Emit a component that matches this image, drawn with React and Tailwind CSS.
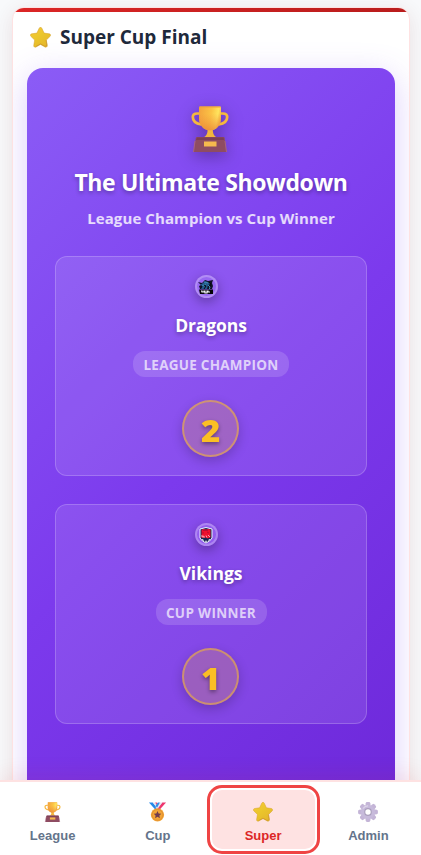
import React from "react";

function Star({ className }) {
  return (
    <svg viewBox="0 0 32 32" className={className}>
      <defs>
        <linearGradient id="starFill" x1="0" y1="0" x2="0.7" y2="1">
          <stop offset="0" stopColor="#f8c83a" />
          <stop offset="0.5" stopColor="#ebc62b" />
          <stop offset="1" stopColor="#e5b62c" />
        </linearGradient>
      </defs>
      <path
        d="M14 1.8c.8-1.7 3.2-1.7 4 0l3.5 7.5 7.9 1.1c1.9.3 2.6 2.5 1.3 3.8l-5.8 5.7 1.4 8.3c.3 1.9-1.7 3.2-3.3 2.3L16 26.6l-7 3.900c-1.700.9-3.600-.5-3.300-2.300l1.400-8.300-5.800-5.700C0 12.900.7 10.700 2.600 10.400l7.900-1.100z"
        fill="url(#starFill)"
        stroke="#d5a22e"
        strokeWidth="0.8"
      />
      <path d="M24.500 20l1.400 8-3.200 1.500L16 25.800l-7 3.900" fill="none" stroke="#c58e2c" strokeWidth="1.300" opacity=".65" />
    </svg>
  );
}

function Trophy({ className }) {
  return (
    <svg viewBox="0 0 38 46" className={className}>
      <defs>
        <linearGradient id="cupFill" x1="0" y1="0.2" x2="1" y2="0.4">
          <stop offset="0" stopColor="#f3a33e" />
          <stop offset="0.55" stopColor="#fbc345" />
          <stop offset="0.85" stopColor="#ffe45e" />
          <stop offset="1" stopColor="#f6b842" />
        </linearGradient>
        <linearGradient id="cupShade" x1="0" y1="0" x2="0" y2="1">
          <stop offset="0.3" stopColor="#ee8a3c" stopOpacity="0" />
          <stop offset="1" stopColor="#e98133" stopOpacity=".75" />
        </linearGradient>
      </defs>
      <path d="M9 7.500H6.200C3 7.500 1.800 9.200 1.800 11c0 4 3.500 6.700 8.500 7.500M29 7.500h2.800c3.200 0 4.400 1.700 4.400 3.500 0 4-3.500 6.700-8.500 7.500" fill="none" stroke="#f5b83e" strokeWidth="2.700" />
      <path d="M16.700 22h5c0 5 .8 7.500 4.200 9.500H12.500c3.400-2 4.200-4.500 4.200-9.500z" fill="#f2b63c" />
      <path d="M8 1.500Q8 .5 9 .5h20q1 0 1 1V13c0 6-5 11.500-11 11.500S8 19 8 13z" fill="url(#cupFill)" />
      <path d="M8 1.500Q8 .5 9 .5h20q1 0 1 1V13c0 6-5 11.500-11 11.500S8 19 8 13z" fill="url(#cupShade)" />
      <path d="M8.500 1h21" stroke="#efa238" />
      <path d="M6 31h26.500q1 0 1.200 1L35.500 46h-33L4.800 32q.2-1 1.200-1z" fill="#8e4c62" />
      <path d="M6 31.500h26.500L33 34H5z" fill="#7c3f54" />
      <path d="M4 35l-1.500 11M34 35l1.500 11" stroke="#a9647f" />
      <path d="M13 35.500h12.500v5H13z" fill="#f7b94d" />
    </svg>
  );
}

function Medal({ className }) {
  return (
    <svg viewBox="0 0 20 21" className={className}>
      <path d="M1 .5h4l6 7-2.500 1.500z" fill="#2689e8" />
      <path d="M5 .5h2.500l5 6-1.500 2z" fill="#e5e3f3" />
      <path d="M7.500.5h2l4 5-1.800 1.500z" fill="#f04878" />
      <path d="M19 .5h-4L9 7.500l2.500 1.500z" fill="#ee376e" />
      <path d="M15 .5h-2.500L8 6l1.500 2z" fill="#e5e3f3" />
      <path d="M12.500.5h-2L8 4l1.500 2z" fill="#338fe9" />
      <circle cx="10" cy="13.500" r="7" fill="#f3a536" />
      <circle cx="10" cy="13.500" r="5.700" fill="none" stroke="#db8a31" strokeWidth=".8" />
      <path d="M10 9.500l1.200 2.500 2.800.3-2 1.900.5 2.800-2.500-1.400-2.500 1.400.5-2.800-2-1.900 2.800-.3z" fill="#713c4e" />
    </svg>
  );
}

function Gear({ className }) {
  return (
    <svg viewBox="0 0 20 20" className={className}>
      <g fill="#c4b5d7">
        {[0, 45, 90, 135, 180, 225, 270, 315].map((a) => (
          <path key={a} transform={`rotate(${a} 10 10)`} d="M7.700 1.200Q7.900.1 9 .1h2q1.100 0 1.300 1.100l.5 4H7.200z" />
        ))}
      </g>
      <circle cx="10" cy="10" r="5.300" fill="none" stroke="#c7badb" strokeWidth="3.600" />
      <circle cx="10" cy="10" r="3.300" fill="#fff" stroke="#a99dbc" strokeWidth="1.200" />
      <path d="M5 6.500Q7 3.800 10 3.800" fill="none" stroke="#ded6e9" strokeWidth="1.200" />
    </svg>
  );
}

function DragonCrest() {
  return (
    <svg viewBox="0 0 18 18" className="h-[18px] w-[18px] shrink-0">
      <path d="M1 4l4 1 3-3 3 1 5-1-1 3 1 3-1 3H3l-1-3 2-1z" fill="#101126" />
      <path d="M3 7l3-2 2-2 3 1 2 2-2 1-1 4H4l2-3z" fill="#235b8e" />
      <path d="M7 4l4 1M5 8l4-2M11 7l2 2-1 3" fill="none" stroke="#3e8ab1" />
      <path d="M12 4l2 2-1 2M7 7l2 1-2 3" fill="none" stroke="#07080d" />
      <path d="M2 11.500h14V16H3z" fill="#050507" />
      <path d="M4 13h1v1h2v-1h1v2h2v-2h1v1h2" fill="none" stroke="#f2f4f7" strokeWidth="1.200" />
    </svg>
  );
}

function VikingCrest() {
  return (
    <svg viewBox="0 0 18 18" className="h-[18px] w-[18px] shrink-0">
      <path d="M3 3l6-1.500L15 3v9q-2 3.500-6 5-4-1.500-6-5z" fill="#172653" stroke="#eef1ff" />
      <path d="M4.500 4L6 3l3 .5L12 3l1.500 1v7.500l-3 1-2-1-4 .5z" fill="#ee102d" />
      <path d="M6 4.500h5M5 7h2M10 6l2 1" stroke="#b90d31" />
      <path d="M5 9v2l2-1v2M9 9.500l1 2M11 9l2 2" fill="none" stroke="#f6a4b0" />
      <path d="M5 13.500l4 2 4-2" fill="none" stroke="#fff" strokeDasharray="2 1.500" />
    </svg>
  );
}

function TeamCard({ crest, name, nameClass, role, roleClass, score }) {
  return (
    <section className="flex h-[220px] flex-col items-center rounded-xl border border-white/20 bg-white/10 pt-[18px]">
      <div className="mr-[10px] flex h-[23px] w-[23px] shrink-0 items-center justify-center rounded-full border-2 border-white/25 bg-white/10 shadow-[0_4px_12px_rgba(0,0,0,0.3)]">
        {crest}
      </div>
      <h3 className={`mt-[15px] whitespace-nowrap leading-6 font-bold text-white [text-shadow:0_2px_4px_rgba(0,0,0,0.3)] ${nameClass}`}>{name}</h3>
      <div className={`mt-[14px] flex h-[26px] shrink-0 items-center justify-center rounded-xl bg-white/15 pt-[2px] text-[13.500px] font-bold whitespace-nowrap text-white/70 ${roleClass}`}>{role}</div>
      <div className="mt-[23px] mr-px flex h-[57px] w-[57px] shrink-0 items-center justify-center rounded-full border-2 border-[#fbbf24]/50 bg-[#fbbf24]/20 pt-1 font-['Open_Sans','Noto_Sans',sans-serif] text-[30px] leading-none font-extrabold text-[#fbbf24] shadow-[0_4px_12px_rgba(0,0,0,0.2)] [text-shadow:0_2px_4px_rgba(0,0,0,0.4)]">
        <span className="scale-x-110">{score}</span>
      </div>
    </section>
  );
}

function NavItem({ icon, label, active }) {
  return (
    <button
      className={`flex h-[63px] w-[107px] flex-col items-center rounded-xl pt-[14px] font-['Liberation_Sans',Arial,sans-serif] text-[13px] font-bold ${
        active ? "bg-[#fee2e2] text-[#dc2626] shadow-[inset_0_0_0_2px_white] outline-3 outline-[#ef4444]" : "text-[#64748b]"
      }`}
    >
      <span className="flex h-5 items-center">{icon}</span>
      <span className="mt-[5px] leading-[18px]">{label}</span>
    </button>
  );
}

export default function App() {
  return (
    <div className="flex h-[855px] w-[421px] flex-col overflow-hidden bg-[#f8f9fb] font-['Open_Sans','Noto_Sans',sans-serif]">
      <main className="min-h-0 flex-1 overflow-hidden pt-[7px] pr-[11px] pl-3">
        <div className="h-[820px] overflow-hidden rounded-xl border border-[#fee2e2] bg-white shadow-[0_4px_20px_rgba(220,38,38,0.05),0_4px_24px_rgba(0,0,0,0.06)]">
          <div className="-mx-px -mt-px h-[5px] bg-gradient-to-r from-[#dc2626] to-[#b91c1c]" />
          <header className="flex h-[56px] items-center pl-[17px]">
            <Star className="-mt-[5px] h-[21px] w-[21px]" />
            <h1 className="-mt-[5px] ml-[9px] text-[19px] font-bold whitespace-nowrap text-[#1e293b]">Super Cup Final</h1>
          </header>
          <div className="mr-[14px] ml-[14px] h-[750px] rounded-2xl bg-[linear-gradient(135deg,#8b5cf6_0%,#7c3aed_50%,#6d28d9_100%)] px-7 pt-[38px] shadow-[0_8px_32px_rgba(139,92,246,0.3)]">
            <div className="flex flex-col items-center">
              <Trophy className="mr-[2px] h-[46px] w-[38px] drop-shadow-[0_4px_8px_rgba(0,0,0,0.3)]" />
              <h2 className="mt-[14px] text-[23px] leading-8 font-bold tracking-[-0.36px] whitespace-nowrap text-white [text-shadow:0_2px_4px_rgba(0,0,0,0.3)]">The Ultimate Showdown</h2>
              <p className="mt-[8px] text-[15px] leading-6 font-bold tracking-[0.09px] whitespace-nowrap text-white/80">League Champion vs Cup Winner</p>
            </div>
            <div className="mt-[26px] flex flex-col gap-[28px]">
              <TeamCard crest={<DragonCrest />} name="Dragons" nameClass="text-[17.500px] tracking-[-0.1px]" role="LEAGUE CHAMPION" roleClass="w-[156px] tracking-[0.26px]" score="2" />
              <TeamCard crest={<VikingCrest />} name="Vikings" nameClass="text-[17.500px]" role="CUP WINNER" roleClass="w-[111px] tracking-[0.35px]" score="1" />
            </div>
          </div>
        </div>
      </main>
      <nav className="z-10 grid h-[75px] shrink-0 grid-cols-4 justify-items-center border-t-2 border-[#fee2e2] bg-white pt-[6px] shadow-[0_-4px_20px_rgba(220,38,38,0.1)]">
        <NavItem icon={<Trophy className="h-5 w-[17px]" />} label="League" />
        <NavItem icon={<Medal className="h-5 w-[19px]" />} label="Cup" />
        <NavItem icon={<Star className="h-5 w-5" />} label="Super" active />
        <NavItem icon={<Gear className="h-5 w-5" />} label="Admin" />
      </nav>
    </div>
  );
}
